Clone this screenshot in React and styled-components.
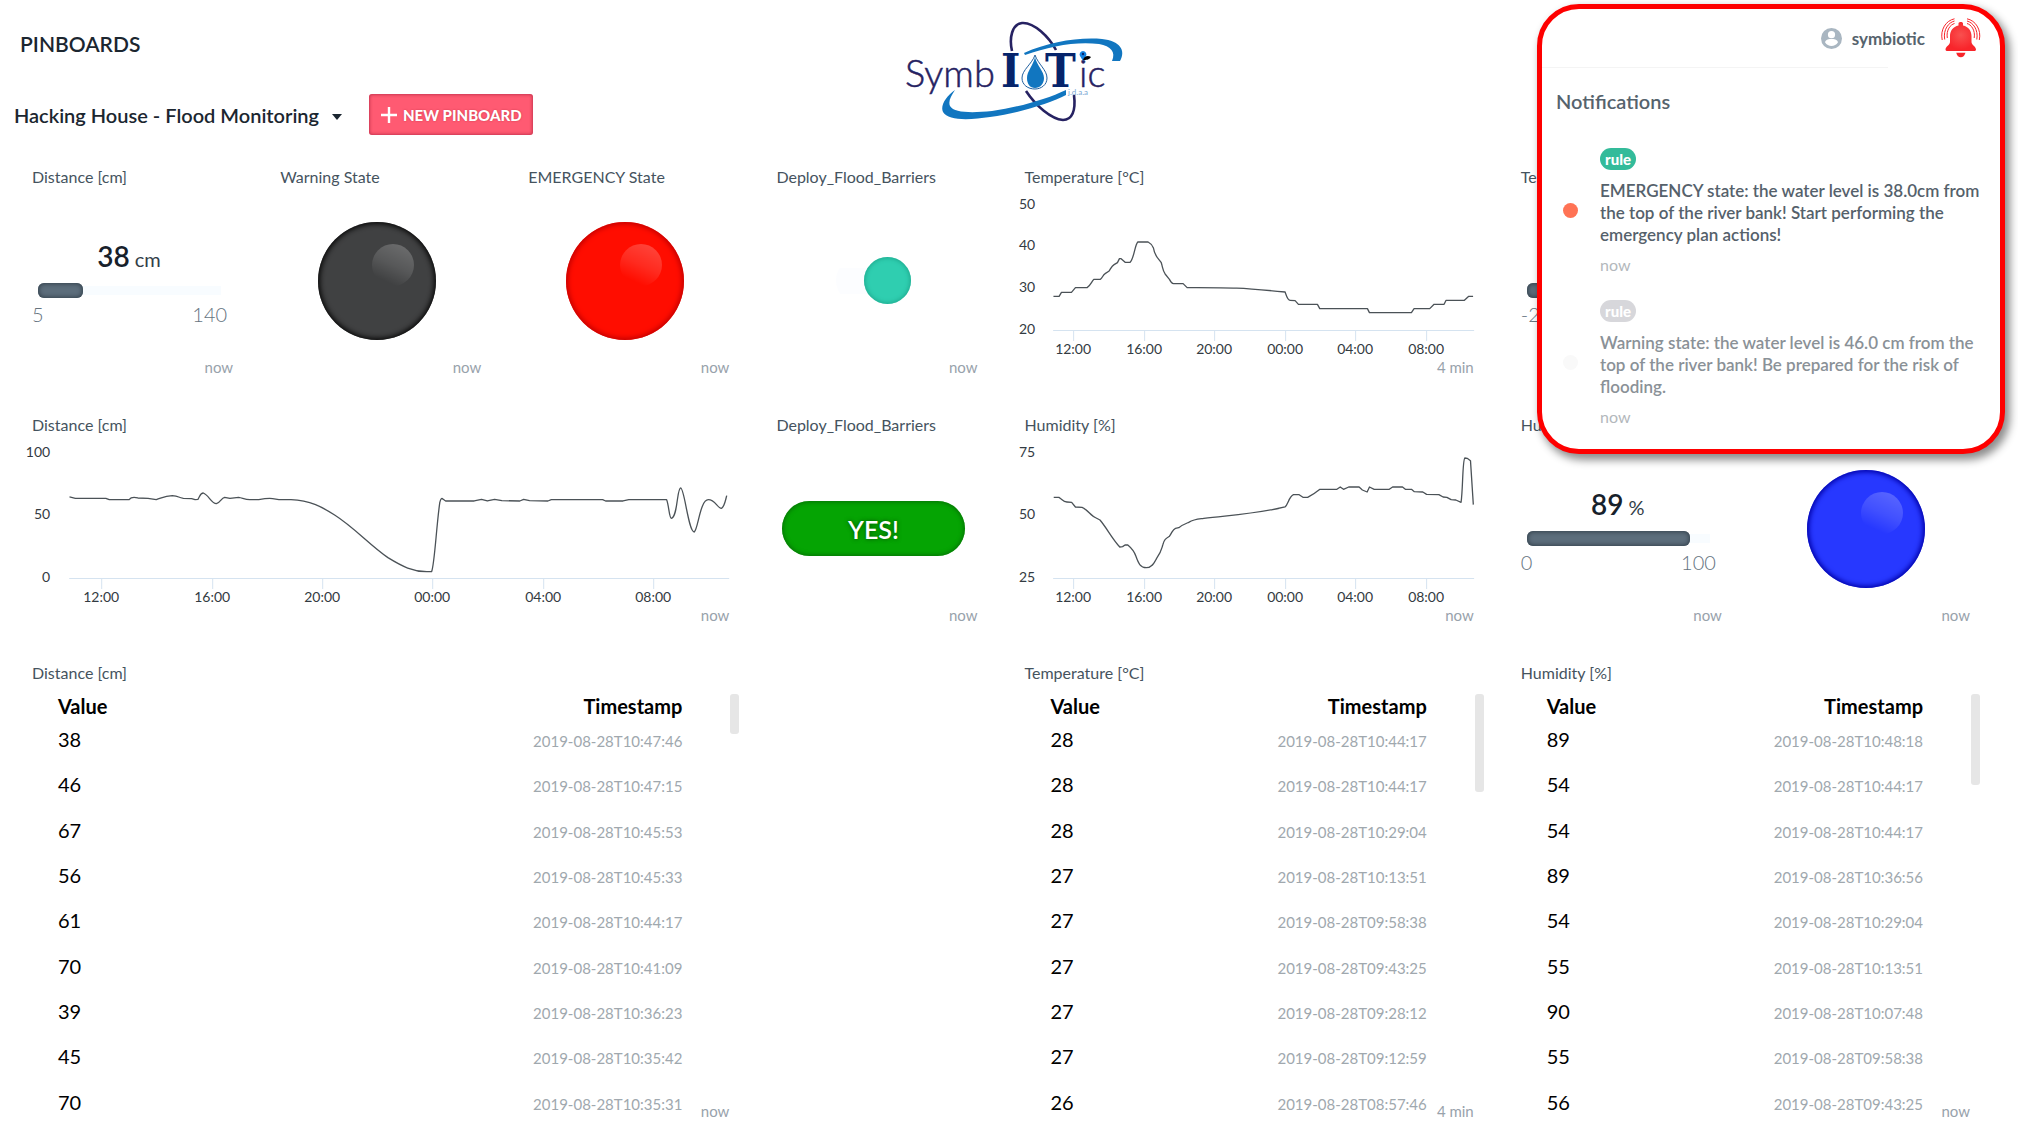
import React from "react";
import styled, { createGlobalStyle } from "styled-components";

const GlobalStyle = createGlobalStyle`
  *, *::before, *::after { box-sizing: border-box; }
  body {
    margin: 0;
    background: #fff;
    color: #1b2630;
    font-family: Lato, "Noto Sans", sans-serif;
    font-size: 16px;
  }
  button, select, input { font-family: inherit; }
`;

const Page = styled.div`
  position: relative;
`;

/* ---------- header ---------- */

const Header = styled.header`
  display: grid;
  grid-template-columns: 1fr auto 1fr;
  height: 150px;
`;

const HeaderLeft = styled.div`
  display: flex;
  flex-direction: column;
  gap: 36px;
  padding: 30px 0 0 14px;
`;

const PageTitle = styled.h1`
  margin: 0;
  padding-left: 6px;
  font-size: 21px;
  line-height: 28px;
  font-weight: 600;
`;

const Toolbar = styled.div`
  display: flex;
  align-items: center;
  gap: 27px;
`;

const PinboardPicker = styled.label`
  display: grid;
  align-items: center;
`;

const PinboardSelect = styled.select`
  grid-area: 1 / 1;
  appearance: none;
  border: 0;
  margin: 0;
  padding: 0 22px 0 0;
  background: none;
  color: inherit;
  font-size: 20px;
  line-height: 28px;
  font-weight: 600;
`;

const Caret = styled.span`
  grid-area: 1 / 1;
  justify-self: end;
  margin-top: 4px;
  border: 5px solid transparent;
  border-top: 6px solid #1b2630;
  border-bottom: 0;
  pointer-events: none;
`;

const NewPinboard = styled.button`
  display: flex;
  align-items: center;
  gap: 5px;
  height: 41px;
  padding: 0 11px;
  border: 0;
  border-radius: 3px;
  background: #ff5a72;
  box-shadow: inset 0 0 3px 1px rgba(150, 20, 50, 0.5);
  color: #fff;
  font-size: 15px;
  font-weight: 900;
  text-shadow: 0 0 2px rgba(160, 30, 50, 0.6);
`;

const LogoDrawing = styled.svg`
  display: block;
`;

const LogoThin = styled.text`
  font-family: Lato, sans-serif;
  font-weight: 300;
  font-size: 38px;
  fill: #262262;
  stroke: #262262;
  stroke-width: 0.5;
`;

const LogoBold = styled.text`
  font-family: "DejaVu Serif Condensed", "DejaVu Serif", serif;
  font-weight: 700;
  font-size: 46px;
  fill: #06246b;
`;

const LogoSmall = styled.text`
  font-family: Lato, sans-serif;
  font-size: 8px;
  fill: #7aa7d4;
`;

function Logo() {
  return (
    <LogoDrawing width="258" height="150" viewBox="0 0 258 150" role="img" aria-label="SymbIoTic">
      <g fill="none" stroke="#262262" strokeWidth="2.6">
        <path d="M132 51 C129 38 132 24 142 23 C154 22 169 37 176 50" />
        <path d="M146 91 C156 106 171 119 183 120 C192 120 196 111 194 95" />
      </g>
      <path
        d="M144 53 C169 42 198 37 222 39 C240 41 246 50 240 61 L232 61 C236 52 231 46 219 44 C197 41 170 46 145 55 Z"
        fill="#1176c0"
      />
      <path
        d="M75 90 C66 96 60 106 63 112 C68 121 90 120 110 117 C140 113 170 103 186 95 L186 90 C167 99 140 107 112 111 C92 113 74 113 70 106 C68 101 71 96 75 90 Z"
        fill="#1176c0"
      />
      <LogoThin x="25" y="87">Symb</LogoThin>
      <LogoBold x="121" y="87">I</LogoBold>
      <path d="M155 55 C158 64 167 70 167 78 C167 85 161 89 155 89 C148 89 142 85 142 78 C142 70 152 64 155 55 Z" fill="#fff" stroke="#1f5f9f" strokeWidth="1" />
      <path d="M155 57 C157 66 164 71 164 78 C164 84 160 88 155 88 C150 88 147 84 147 78 C147 71 153 66 155 57 Z" fill="#1176c0" />
      <LogoBold x="165" y="87">T</LogoBold>
      <LogoThin x="199" y="87">ic</LogoThin>
      <path d="M203 61 L200 56 A3.4 3.4 0 1 1 206 56 Z" fill="#1583e0" />
      <circle cx="203" cy="54" r="1.2" fill="#06246b" />
      <path d="M203 60 C204 56 208 55 211 57 C209 60 206 60 203 60 Z" fill="#000" />
      <LogoSmall x="188" y="95">j.d.a.a</LogoSmall>
    </LogoDrawing>
  );
}

/* ---------- dashboard grid ---------- */

const Dashboard = styled.main`
  display: grid;
  grid-template-columns: repeat(8, 1fr);
  grid-template-rows: 210px 210px 458px;
  column-gap: 20px;
  row-gap: 38px;
  padding: 17px 38px 0 15px;
`;

const Card = styled.section`
  grid-column: ${(p) => p.$col} / span ${(p) => p.$span || 1};
  grid-row: ${(p) => p.$row};
  display: grid;
  grid-template-rows: 20px minmax(0, 1fr);
  grid-template-columns: minmax(0, 1fr);
`;

const CardTitle = styled.h2`
  grid-area: 1 / 1;
  margin: 0;
  padding-left: 17px;
  font-size: 16px;
  line-height: 20px;
  font-weight: 400;
  color: #45535e;
`;

const Updated = styled.span`
  grid-area: 2 / 1;
  align-self: end;
  justify-self: end;
  padding-right: 10px;
  font-size: 15px;
  line-height: 20px;
  color: #98a2ab;
`;

const Centered = styled.div`
  grid-area: 2 / 1;
  display: flex;
  align-items: center;
  justify-content: center;
  padding-bottom: 3px;
`;

function Widget({ col, span, row, title, updated, children }) {
  return (
    <Card $col={col} $span={span} $row={row}>
      {title && <CardTitle>{title}</CardTitle>}
      {children}
      {updated && <Updated>{updated}</Updated>}
    </Card>
  );
}

/* ---------- gauge ---------- */

const GaugeBox = styled(Centered)`
  flex-direction: column;
  align-items: stretch;
`;

const Reading = styled.div`
  padding-top: 3px;
  text-align: center;
  font-size: 20px;
  line-height: 34px;
  color: #333e48;
`;

const ReadingValue = styled.span`
  margin-right: 5px;
  font-size: 28px;
  font-weight: 600;
  color: #17212b;
`;

const Track = styled.div`
  display: flex;
  align-items: center;
  height: 15px;
  margin: 7px 22px 4px 23px;
  background: linear-gradient(#f8fcff, #f8fcff) center / 100% 9px no-repeat;
`;

const Fill = styled.div`
  height: 15px;
  border-radius: 6px;
  background: #5c6d7b;
  box-shadow: inset 0 0 4px 1px #34424d;
`;

const Range = styled.div`
  display: flex;
  justify-content: space-between;
  padding: 0 16px 0 17px;
  font-size: 20px;
  line-height: 24px;
  font-weight: 300;
  color: #66747f;
`;

function Gauge({ value, unit, min, max }) {
  const percent = ((value - min) / (max - min)) * 100;
  return (
    <GaugeBox>
      <Reading>
        <ReadingValue>{value}</ReadingValue>
        {unit}
      </Reading>
      <Track role="meter" aria-valuenow={value} aria-valuemin={min} aria-valuemax={max}>
        <Fill style={{ width: `${percent}%` }} />
      </Track>
      <Range>
        <span>{min}</span>
        <span>{max}</span>
      </Range>
    </GaugeBox>
  );
}

/* ---------- led, switch, button ---------- */

const Led = styled.div`
  position: relative;
  width: 118px;
  height: 118px;
  border-radius: 50%;
  background: ${(p) => p.$color};
  box-shadow: inset 0 0 5px 2px ${(p) => p.$rim};

  &::after {
    content: "";
    position: absolute;
    top: 22px;
    left: 54px;
    width: 42px;
    height: 42px;
    border-radius: 50%;
    background: linear-gradient(205deg, rgba(255, 255, 255, 0.25), rgba(255, 255, 255, 0.12) 50%, transparent 82%);
  }
`;

const Switch = styled.input`
  appearance: none;
  display: flex;
  justify-content: flex-end;
  width: 75px;
  height: 47px;
  margin: 0;
  border-radius: 24px;
  background: linear-gradient(#fcfdff, #fcfdff) center / 100% 26px no-repeat;

  &::before {
    content: "";
    width: 47px;
    height: 47px;
    border-radius: 50%;
    background: #2fceb0;
    box-shadow: inset 0 0 4px 1px #1fa98e;
  }
`;

const ActionButton = styled.button`
  flex: 1;
  height: 55px;
  margin: 0 23px;
  border: 0;
  border-radius: 28px;
  background: #05a403;
  box-shadow: inset 0 0 4px 1px #067006;
  color: #fff;
  font-size: 25px;
  font-weight: 600;
  text-shadow: 0 0 4px rgba(0, 60, 0, 0.8);
`;

/* ---------- charts ---------- */

const ChartDrawing = styled.svg`
  grid-area: 2 / 1;
  display: block;
  width: 100%;
  height: 190px;
  font-size: 14px;
  fill: #333b42;
`;

const Axis = styled.path`
  fill: none;
  stroke: #d5e3f0;
`;

const Series = styled.path`
  fill: none;
  stroke: #4b5257;
  stroke-width: 1.3;
  stroke-linejoin: round;
  vector-effect: non-scaling-stroke;
`;

const HOURS = ["12:00", "16:00", "20:00", "00:00", "04:00", "08:00"];

function Chart({ label, width, left, labelRight, ticks, levels, path, transform }) {
  const base = 143;
  const step = 125 / (levels.length - 1);
  return (
    <ChartDrawing viewBox={`0 0 ${width} 190`} role="img" aria-label={label}>
      <Axis d={`M${left} ${base + 0.5}H${width - 10}` + ticks.map((x) => `M${x + 0.5} ${base}v11`).join("")} />
      {levels.map((level, i) => (
        <text key={level} x={labelRight} y={Math.floor(22 + i * step)} textAnchor="end">
          {level}
        </text>
      ))}
      {ticks.map((x, i) => (
        <text key={x} x={x} y="167" textAnchor="middle">
          {HOURS[i]}
        </text>
      ))}
      <Series d={path} transform={transform} />
    </ChartDrawing>
  );
}

const TEMPERATURE_PATH =
  "M70 319L87 319L94 307L124 307L136 293L171 293C180 288 184 276 191 268L211 268C218 262 218 255 225 251L236 244C242 236 244 229 252 224L262 218L268 206L273 206L285 217L300 217C312 205 314 165 323 156L354 156C362 160 366 164 370 174C374 200 384 204 393 217C398 232 398 242 405 252L418 268C422 276 424 281 430 281L459 281L471 293C600 293 620 292 765 306C770 320 772 331 780 331L795 332L805 343L862 343L869 356L1012 356L1018 368L1144 368L1152 356L1199 356L1212 343L1242 343L1248 331L1303 331L1316 319L1329 319";
const DISTANCE_PATH =
  "M143 264L155 268L218 268L225 272L266 272C270 264 276 264 284 267L305 268L322 272C335 266 340 261 355 260C370 261 366 266 378 268L395 269L402 272L408 271C412 262 413 252 419 252C430 258 436 284 446 284C455 280 456 267 463 265L474 268L492 265C500 267 505 271 515 272L532 272C545 269 553 267 562 269L575 272L600 272C640 274 665 295 690 318C730 355 760 405 800 446C830 473 852 488 880 488L890 488C896 470 900 350 907 280C909 268 911 266 914 271L919 276L978 276L993 271L1005 276L1020 271L1035 275L1072 276L1080 271L1092 275L1130 276L1137 272L1243 272L1249 276L1285 276L1297 272L1375 272C1380 290 1380 328 1385 328C1398 322 1396 237 1404 237C1412 240 1420 369 1432 369C1440 360 1444 272 1461 272C1475 272 1480 298 1488 298C1494 295 1496 275 1499 260";
const HUMIDITY_PATH =
  "M622 262L633 262C640 268 642 275 650 276L660 277L668 291L682 292C695 300 700 318 712 324L720 330C735 355 745 385 762 411L768 410L773 405L779 405C790 418 794 430 796 438C802 462 806 473 818 473C832 473 836 455 840 445C850 425 850 420 853 405C856 388 860 385 867 379C874 365 874 358 880 355L887 353C895 344 903 340 908 337C920 327 930 327 940 325C1000 315 1050 312 1112 291C1119 283 1120 260 1130 254L1142 254L1150 262L1160 262C1168 256 1176 250 1186 238L1222 238L1229 231L1236 238L1247 231L1269 231L1276 240L1286 246L1291 231L1301 238L1333 238L1340 231L1361 231L1367 238L1380 238L1386 245L1404 246L1412 253L1438 254L1447 261L1455 262L1464 269L1474 270L1485 277C1489 240 1488 150 1493 144L1498 145L1505 152L1511 284";

/* ---------- tables ---------- */

const TableArea = styled.div`
  grid-area: 2 / 1;
  padding: 11px 57px 0 43px;
`;

const Table = styled.table`
  width: 100%;
  height: 432px;
  border-collapse: collapse;
  color: #000;
  font-size: 20px;
  line-height: 24px;
`;

const HeadCell = styled.th`
  height: 24px;
  padding: 0;
  font-weight: 700;
  text-align: ${(p) => (p.$end ? "right" : "left")};
`;

const ValueCell = styled.td`
  padding: 9px 0 0;
  vertical-align: baseline;
`;

const StampCell = styled.td`
  padding: 9px 0 0;
  vertical-align: baseline;
  text-align: right;
  font-size: 15px;
  color: #a0a8ae;
`;

const ScrollThumb = styled.div`
  grid-area: 2 / 1;
  justify-self: end;
  width: 9px;
  height: ${(p) => p.$length}px;
  margin-top: 11px;
  border-radius: 3px;
  background: #e6e6e6;
`;

function History({ rows, thumb }) {
  return (
    <>
      <TableArea>
        <Table>
          <thead>
            <tr>
              <HeadCell>Value</HeadCell>
              <HeadCell $end>Timestamp</HeadCell>
            </tr>
          </thead>
          <tbody>
            {rows.map(([value, time], i) => (
              <tr key={i}>
                <ValueCell>{value}</ValueCell>
                <StampCell>2019-08-28T{time}</StampCell>
              </tr>
            ))}
          </tbody>
        </Table>
      </TableArea>
      <ScrollThumb $length={thumb} />
    </>
  );
}

const DISTANCE_ROWS = [
  [38, "10:47:46"], [46, "10:47:15"], [67, "10:45:53"], [56, "10:45:33"], [61, "10:44:17"],
  [70, "10:41:09"], [39, "10:36:23"], [45, "10:35:42"], [70, "10:35:31"],
];
const TEMPERATURE_ROWS = [
  [28, "10:44:17"], [28, "10:44:17"], [28, "10:29:04"], [27, "10:13:51"], [27, "09:58:38"],
  [27, "09:43:25"], [27, "09:28:12"], [27, "09:12:59"], [26, "08:57:46"],
];
const HUMIDITY_ROWS = [
  [89, "10:48:18"], [54, "10:44:17"], [54, "10:44:17"], [89, "10:36:56"], [54, "10:29:04"],
  [55, "10:13:51"], [90, "10:07:48"], [55, "09:58:38"], [56, "09:43:25"],
];

/* ---------- notifications ---------- */

const Panel = styled.aside`
  position: absolute;
  top: 4px;
  right: 13px;
  width: 468px;
  height: 450px;
  border: 5px solid #fe0000;
  border-radius: 42px;
  background: #fff;
  box-shadow: 4px 5px 8px 1px rgba(0, 0, 0, 0.45);
`;

const UserBar = styled.div`
  display: flex;
  align-items: center;
  justify-content: flex-end;
  height: 58px;
  padding-right: 19px;
`;

const UserName = styled.span`
  margin: 0 16px 0 10px;
  font-size: 17px;
  font-weight: 700;
  color: #56636d;
`;

const PanelRule = styled.hr`
  margin: 0 112px 0 0;
  border: 0;
  border-top: 1px solid #f4f4f4;
`;

const PanelTitle = styled.h2`
  margin: 20px 0 34px 14px;
  font-size: 20px;
  line-height: 26px;
  font-weight: 600;
  color: #56636d;
`;

const NoticeList = styled.ul`
  display: flex;
  flex-direction: column;
  gap: 24px;
  margin: 0;
  padding: 0 10px 0 21px;
  list-style: none;
`;

const Notice = styled.li`
  display: grid;
  grid-template-columns: 15px 1fr;
  column-gap: 22px;
  align-items: center;
  color: ${(p) => (p.$unread ? "#55616b" : "#8a9197")};
`;

const Dot = styled.span`
  height: 15px;
  margin-bottom: 4px;
  border-radius: 50%;
  background: ${(p) => (p.$unread ? "#ff7355" : "#f9f9f9")};
`;

const NoticeBody = styled.div`
  display: flex;
  flex-direction: column;
  align-items: flex-start;
`;

const Tag = styled.span`
  padding: 0 5px;
  border-radius: 11px;
  background: ${(p) => (p.$unread ? "#33bb9a" : "#d7d7db")};
  color: #fff;
  font-size: 15px;
  line-height: 22px;
  font-weight: 900;
`;

const NoticeText = styled.p`
  margin: 10px 0 8px;
  font-size: 17px;
  line-height: 22px;
  font-weight: 600;
`;

const NoticeTime = styled.span`
  font-size: 16px;
  line-height: 22px;
  color: #b3b8bc;
`;

const NOTICES = [
  {
    unread: true,
    text: "EMERGENCY state: the water level is 38.0cm from the top of the river bank! Start performing the emergency plan actions!",
  },
  {
    unread: false,
    text: "Warning state: the water level is 46.0 cm from the top of the river bank! Be prepared for the risk of flooding.",
  },
];

function Avatar() {
  return (
    <svg width="21" height="21" viewBox="0 0 21 21" aria-hidden="true">
      <circle cx="10.5" cy="10.5" r="10.5" fill="#a9b6c1" />
      <circle cx="10.5" cy="6.7" r="3.6" fill="#fff" />
      <path d="M4 14.2C4.800 11.500 8 11 10.500 11S16.200 11.500 17 14.200C15.500 16.700 13 18 10.500 18S5.500 16.700 4 14.200Z" fill="#fff" />
    </svg>
  );
}

function Bell() {
  return (
    <svg width="40" height="40" viewBox="0 0 40 40" aria-hidden="true">
      <defs>
        <radialGradient id="bell" cx="0.5" cy="0.45" r="0.5">
          <stop offset="0" stopColor="#f9504f" />
          <stop offset="1" stopColor="#f8252b" />
        </radialGradient>
      </defs>
      <path
        d="M17.500 5.500C17.500 4.500 18.500 4 19.800 4S22 4.500 22 5.500V7.500C27.500 8.700 30.500 13 30.500 18V24C30.500 27 35 28.500 35 31.500C35 32.500 34 33 33 33H6.500C5.500 33 4.500 32.500 4.500 31.500C4.500 28.500 9 27 9 24V18C9 13 12 8.700 17.500 7.500Z"
        fill="url(#bell)"
      />
      <path d="M15.200 34.800H24.500C23.500 38 22 39.300 19.800 39.300S16 38 15.200 34.800Z" fill="#f8252b" />
      <g fill="none" stroke="#f8252b" strokeWidth="1">
        <path d="M13.500 0.800C5 2.500 -1 11.500 1.200 22" />
        <path d="M13.500 3C7.500 4.500 2 11.500 3.700 21.500" />
        <path d="M13.500 5.500C9.500 6.500 5 12 6.300 20" />
        <path d="M26 0.800C34.500 2.500 40.500 11.500 38.300 22" />
        <path d="M26 3C32 4.500 37.500 11.500 35.800 21.500" />
        <path d="M26 5.500C30 6.500 34.500 12 33.200 20" />
      </g>
    </svg>
  );
}

function Plus() {
  return (
    <svg width="18" height="18" viewBox="0 0 18 18" aria-hidden="true">
      <path d="M9 1V17M1 9H17" stroke="#fff" strokeWidth="2.4" />
    </svg>
  );
}

export default function App() {
  return (
    <Page>
      <GlobalStyle />
      <Header>
        <HeaderLeft>
          <PageTitle>PINBOARDS</PageTitle>
          <Toolbar>
            <PinboardPicker>
              <PinboardSelect aria-label="Pinboard">
                <option>Hacking House - Flood Monitoring</option>
              </PinboardSelect>
              <Caret />
            </PinboardPicker>
            <NewPinboard type="button">
              <Plus />
              NEW PINBOARD
            </NewPinboard>
          </Toolbar>
        </HeaderLeft>
        <Logo />
      </Header>

      <Dashboard>
        <Widget col={1} row={1} title="Distance [cm]" updated="now">
          <Gauge value={38} unit="cm" min={5} max={140} />
        </Widget>
        <Widget col={2} row={1} title="Warning State" updated="now">
          <Centered>
            <Led $color="#404142" $rim="#0a0a0a" />
          </Centered>
        </Widget>
        <Widget col={3} row={1} title="EMERGENCY State" updated="now">
          <Centered>
            <Led $color="#ff0d00" $rim="#c40000" />
          </Centered>
        </Widget>
        <Widget col={4} row={1} title="Deploy_Flood_Barriers" updated="now">
          <Centered>
            <Switch type="checkbox" role="switch" defaultChecked aria-label="Deploy_Flood_Barriers" />
          </Centered>
        </Widget>
        <Widget col={5} span={2} row={1} title="Temperature [°C]" updated="4 min">
          <Chart
            label="Temperature"
            width={476}
            left={45}
            labelRight={27}
            ticks={[65, 136, 206, 277, 347, 418]}
            levels={[50, 40, 30, 20]}
            path={TEMPERATURE_PATH}
            transform="translate(22 3) scale(0.3333)"
          />
        </Widget>
        <Widget col={7} row={1} title="Temperature [°C]">
          <Gauge value={28} unit="°C" min={-20} max={60} />
        </Widget>

        <Widget col={1} span={3} row={2} title="Distance [cm]" updated="now">
          <Chart
            label="Distance"
            width={724}
            left={54}
            labelRight={35}
            ticks={[86, 197, 307, 417, 528, 638]}
            levels={[100, 50, 0]}
            path={DISTANCE_PATH}
            transform="translate(-15 -26) scale(0.4847 0.3333)"
          />
        </Widget>
        <Widget col={4} row={2} title="Deploy_Flood_Barriers" updated="now">
          <Centered>
            <ActionButton type="button">YES!</ActionButton>
          </Centered>
        </Widget>
        <Widget col={5} span={2} row={2} title="Humidity [%]" updated="now">
          <Chart
            label="Humidity"
            width={476}
            left={45}
            labelRight={27}
            ticks={[65, 136, 206, 277, 347, 418]}
            levels={[75, 50, 25]}
            path={HUMIDITY_PATH}
            transform="translate(-248 -25) scale(0.472 0.3333)"
          />
        </Widget>
        <Widget col={7} row={2} title="Humidity [%]" updated="now">
          <Gauge value={89} unit="%" min={0} max={100} />
        </Widget>
        <Widget col={8} row={2} updated="now">
          <Centered>
            <Led $color="#2738ff" $rim="#0000a8" />
          </Centered>
        </Widget>

        <Widget col={1} span={3} row={3} title="Distance [cm]" updated="now">
          <History rows={DISTANCE_ROWS} thumb={40} />
        </Widget>
        <Widget col={5} span={2} row={3} title="Temperature [°C]" updated="4 min">
          <History rows={TEMPERATURE_ROWS} thumb={98} />
        </Widget>
        <Widget col={7} span={2} row={3} title="Humidity [%]" updated="now">
          <History rows={HUMIDITY_ROWS} thumb={91} />
        </Widget>
      </Dashboard>

      <Panel>
        <UserBar>
          <Avatar />
          <UserName>symbiotic</UserName>
          <Bell />
        </UserBar>
        <PanelRule />
        <PanelTitle>Notifications</PanelTitle>
        <NoticeList>
          {NOTICES.map((n) => (
            <Notice key={n.text} $unread={n.unread}>
              <Dot $unread={n.unread} />
              <NoticeBody>
                <Tag $unread={n.unread}>rule</Tag>
                <NoticeText>{n.text}</NoticeText>
                <NoticeTime>now</NoticeTime>
              </NoticeBody>
            </Notice>
          ))}
        </NoticeList>
      </Panel>
    </Page>
  );
}
